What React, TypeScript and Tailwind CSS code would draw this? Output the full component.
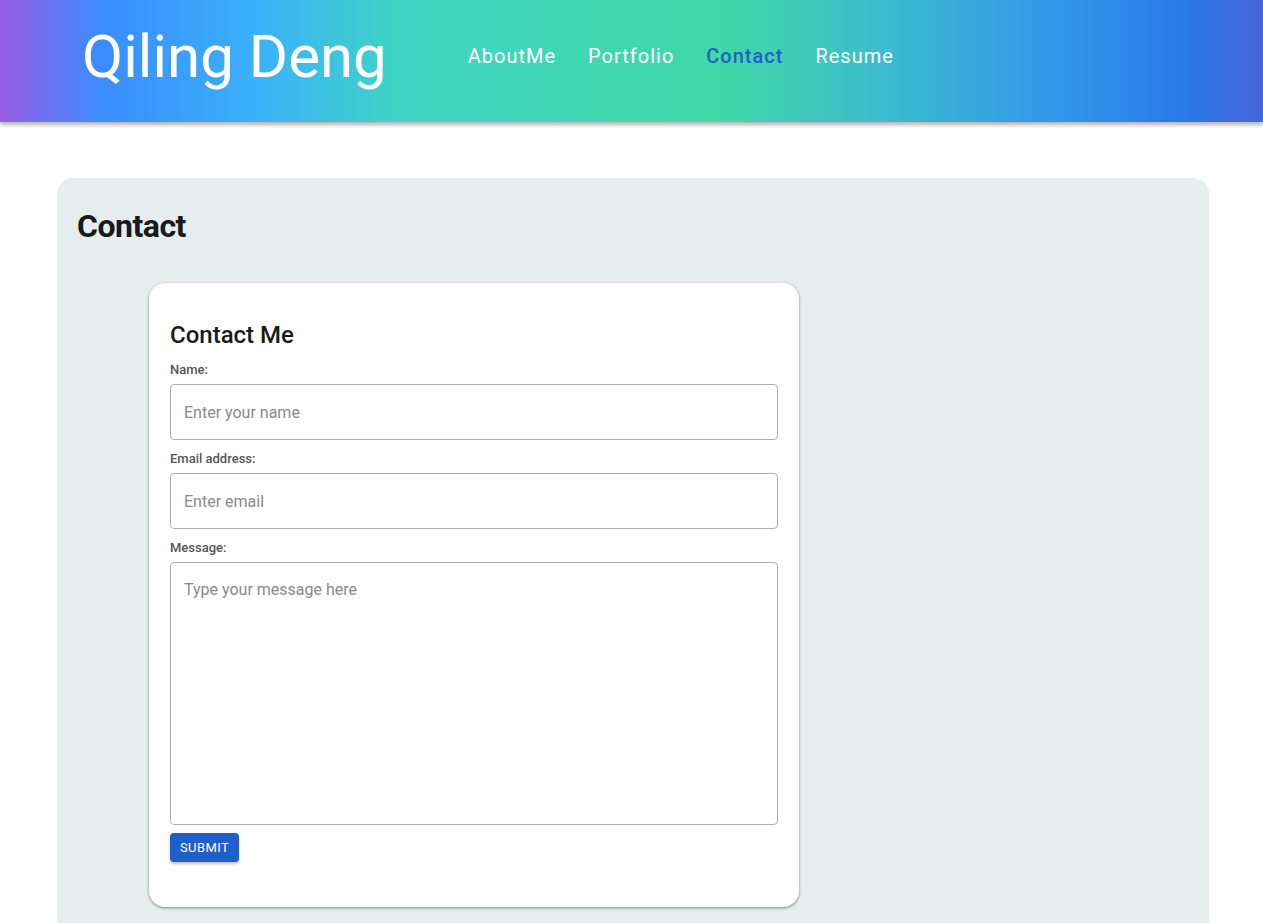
import { useState } from 'react'

const links = ['AboutMe', 'Portfolio', 'Contact', 'Resume']

export default function App() {
  const [name, setName] = useState('')
  const [email, setEmail] = useState('')
  const [message, setMessage] = useState('')

  return (
    <div className="min-h-screen bg-white font-['Roboto',_'Liberation_Sans',_sans-serif]">
      <header className="relative z-10 flex h-[122px] items-center bg-[linear-gradient(90deg,#9a5de6_0%,#3a8cff_8%,#3bb0fb_20%,#40d5c3_32%,#40d8a6_57%,#3cbcce_70%,#3196ec_84%,#2979e6_94%,#4766d9_100%)] pl-[82px] shadow-[0_3px_4px_rgba(0,0,0,0.3)]">
        <h1 className="pb-[8px] text-[60px] font-normal leading-none text-white">Qiling Deng</h1>
        <nav className="ml-[81px] flex gap-[32px] pb-[10px]">
          {links.map((l) => (
            <a
              key={l}
              href="#"
              className={`text-[20px] tracking-[1px] ${l === 'Contact' ? 'font-medium text-[#1f5fc8]' : 'text-white'}`}
            >
              {l}
            </a>
          ))}
        </nav>
      </header>

      <main className="pl-[57px] pr-[54px] pt-[56px]">
        <section className="rounded-t-[16px] bg-[#e6eded] px-[20px] pb-[16px] pt-[29px]">
          <h2 className="text-[32px] font-bold leading-[38px] tracking-[-0.5px] text-[#1a1a1a]">Contact</h2>

          <div className="ml-[72px] mt-[38px] w-[650px] rounded-[16px] bg-white px-[21px] pb-[45px] pt-[37px] shadow-[0_1px_3px_rgba(0,0,0,0.45)]">
            <h3 className="text-[24px] font-medium leading-[30px] text-[#1a1a1a]">Contact Me</h3>
            <form
              className="mt-[12px] flex flex-col"
              onSubmit={(e) => e.preventDefault()}
            >
              <label className="text-[13px] font-medium leading-[16px] text-[#555]">Name:</label>
              <input
                value={name}
                onChange={(e) => setName(e.target.value)}
                placeholder="Enter your name"
                className="mt-[6px] h-[56px] w-[608px] rounded-[4px] border border-[#b0b0b0] px-[13px] text-[16px] outline-none placeholder:text-[#8a8a8a]"
              />
              <label className="mt-[11px] text-[13px] font-medium leading-[16px] text-[#555]">Email address:</label>
              <input
                value={email}
                onChange={(e) => setEmail(e.target.value)}
                placeholder="Enter email"
                className="mt-[6px] h-[56px] w-[608px] rounded-[4px] border border-[#b0b0b0] px-[13px] text-[16px] outline-none placeholder:text-[#8a8a8a]"
              />
              <label className="mt-[11px] text-[13px] font-medium leading-[16px] text-[#555]">Message:</label>
              <textarea
                value={message}
                onChange={(e) => setMessage(e.target.value)}
                placeholder="Type your message here"
                className="mt-[6px] h-[263px] w-[608px] resize-none rounded-[4px] border border-[#b0b0b0] px-[13px] py-[17px] text-[16px] leading-[20px] outline-none placeholder:text-[#8a8a8a]"
              />
              <button
                type="submit"
                className="mt-[8px] h-[29px] w-[69px] rounded-[4px] bg-[#1f5fc9] text-[13px] font-normal tracking-[0.4px] text-white shadow-[0_2px_3px_rgba(0,0,0,0.25)]"
              >
                SUBMIT
              </button>
            </form>
          </div>
        </section>
      </main>
    </div>
  )
}
